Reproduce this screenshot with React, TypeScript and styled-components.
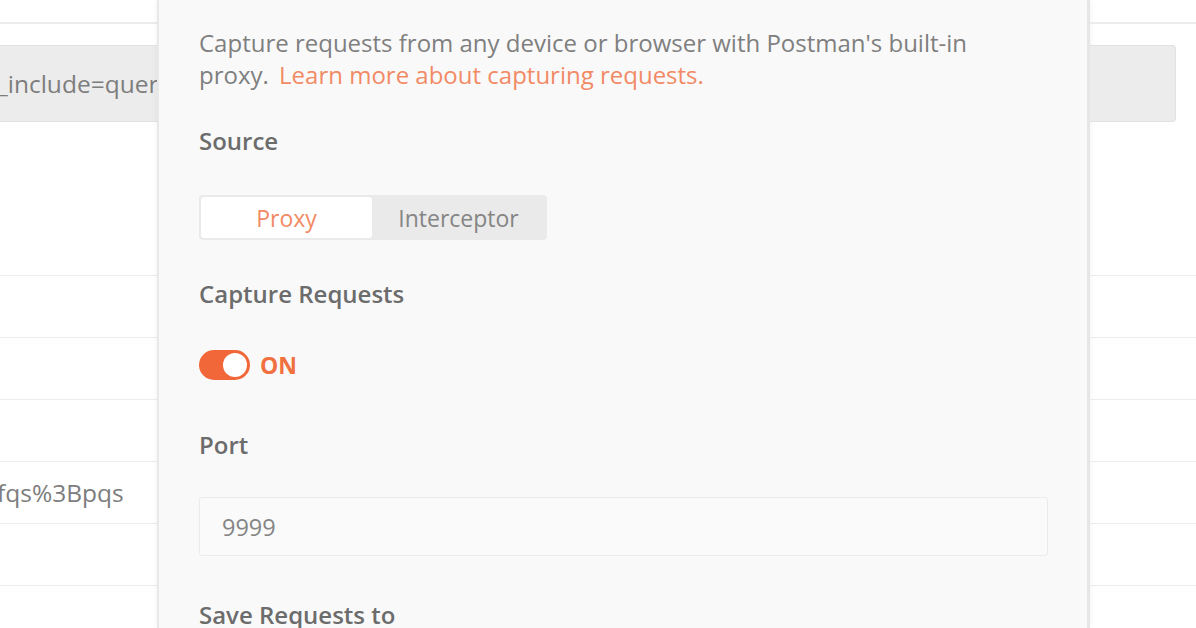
import styled, { createGlobalStyle } from "styled-components";

const GlobalStyle = createGlobalStyle`
  html, body {
    margin: 0;
    padding: 0;
    background: #ffffff;
    font-family: "Open Sans", "Noto Sans", sans-serif;
    overflow: hidden;
  }
`;

const Page = styled.div`
  display: flex;
  width: 1196px;
  height: 628px;
  overflow: hidden;
  background: #ffffff;
`;

const SidePanel = styled.div<{ $width: number }>`
  width: ${(p) => p.$width}px;
  flex-shrink: 0;
  display: flex;
  flex-direction: column;
  overflow: hidden;
  padding-top: 22px;
  box-sizing: border-box;

  & > * {
    flex-shrink: 0;
  }
`;

const TopRule = styled.div`
  border-top: 2px solid #ececec;
  height: 21px;
`;

const UrlBar = styled.div<{ $rounded?: boolean }>`
  height: 77px;
  margin-right: ${(p) => (p.$rounded ? "20px" : "0")};
  background: #ececec;
  border: 1px solid #e2e2e2;
  border-left: none;
  border-right: ${(p) => (p.$rounded ? "1px solid #e2e2e2" : "none")};
  border-radius: ${(p) => (p.$rounded ? "0 4px 4px 0" : "0")};
  display: flex;
  align-items: center;
  white-space: nowrap;
  font-size: 24.5px;
  color: #7d7d7d;
  box-sizing: border-box;
`;

const Clip = styled.span`
  margin-left: -3px;
`;

const Spacer = styled.div`
  height: 153px;
  border-bottom: 1px solid #ececec;
`;

const Row = styled.div`
  height: 61px;
  border-bottom: 1px solid #ececec;
  display: flex;
  align-items: center;
  white-space: nowrap;
  font-size: 24.5px;
  color: #7d7d7d;
`;

const Modal = styled.div`
  width: 933px;
  flex-shrink: 0;
  background: #f9f9f9;
  border-left: 2px solid #e8e8e8;
  border-right: 3px solid #e6e6e6;
  box-shadow: 0 0 6px rgba(0, 0, 0, 0.06);
  box-sizing: border-box;
  padding: 27px 40px 0 40px;
  display: flex;
  flex-direction: column;
  align-items: flex-start;
  overflow: hidden;

  & > * {
    flex-shrink: 0;
  }
`;

const Description = styled.p`
  margin: 0;
  font-size: 24px;
  line-height: 32px;
  color: #7f7f7f;
  white-space: nowrap;
`;

const Link = styled.a`
  color: #f28a66;
  text-decoration: none;
  margin-left: 4px;
`;

const Label = styled.div<{ $top: number }>`
  margin-top: ${(p) => p.$top}px;
  font-size: 24px;
  line-height: 32px;
  font-weight: 600;
  color: #6c6c6c;
  white-space: nowrap;
`;

const Segmented = styled.div`
  margin-top: 38px;
  display: flex;
  background: #eaeaea;
  border-radius: 4px;
  padding: 2px;
  height: 45px;
  box-sizing: border-box;
`;

const Segment = styled.div<{ $active?: boolean }>`
  width: ${(p) => (p.$active ? "171px" : "173px")};
  display: flex;
  align-items: center;
  justify-content: center;
  border-radius: 3px;
  background: ${(p) => (p.$active ? "#ffffff" : "transparent")};
  color: ${(p) => (p.$active ? "#f28a66" : "#858585")};
  font-size: 23px;
`;

const ToggleRow = styled.div`
  margin-top: 40px;
  display: flex;
  align-items: center;
  gap: 10px;
  height: 30px;
`;

const Track = styled.div`
  width: 51px;
  height: 30px;
  border-radius: 15px;
  background: #f2673a;
  display: flex;
  align-items: center;
  justify-content: flex-end;
  padding: 3px;
  box-sizing: border-box;
`;

const Knob = styled.div`
  width: 24px;
  height: 24px;
  border-radius: 50%;
  background: #ffffff;
`;

const ToggleText = styled.span`
  font-size: 23px;
  font-weight: 700;
  color: #f0703f;
`;

const Input = styled.div`
  margin-top: 36px;
  width: 849px;
  height: 59px;
  box-sizing: border-box;
  border: 1px solid #ebebeb;
  border-radius: 3px;
  background: #fafafa;
  display: flex;
  align-items: center;
  padding-left: 22px;
  font-size: 23.5px;
  color: #858585;
`;

const rows = ["", "", "", "fqs%3Bpqs", "", ""];

export default function App() {
  return (
    <>
      <GlobalStyle />
      <Page>
        <SidePanel $width={157}>
          <TopRule />
          <UrlBar>
            <Clip>_include=query</Clip>
          </UrlBar>
          <Spacer />
          {rows.map((r, i) => (
            <Row key={i}>{r && <Clip>{r}</Clip>}</Row>
          ))}
        </SidePanel>
        <Modal>
          <Description>
            Capture requests from any device or browser with Postman's built-in
            <br />
            proxy. <Link>Learn more about capturing requests.</Link>
          </Description>
          <Label $top={34}>Source</Label>
          <Segmented>
            <Segment $active>Proxy</Segment>
            <Segment>Interceptor</Segment>
          </Segmented>
          <Label $top={38}>Capture Requests</Label>
          <ToggleRow>
            <Track>
              <Knob />
            </Track>
            <ToggleText>ON</ToggleText>
          </ToggleRow>
          <Label $top={49}>Port</Label>
          <Input>9999</Input>
          <Label $top={43}>Save Requests to</Label>
        </Modal>
        <SidePanel $width={106}>
          <TopRule />
          <UrlBar $rounded />
          <Spacer />
          {rows.map((_, i) => (
            <Row key={i} />
          ))}
        </SidePanel>
      </Page>
    </>
  );
}
